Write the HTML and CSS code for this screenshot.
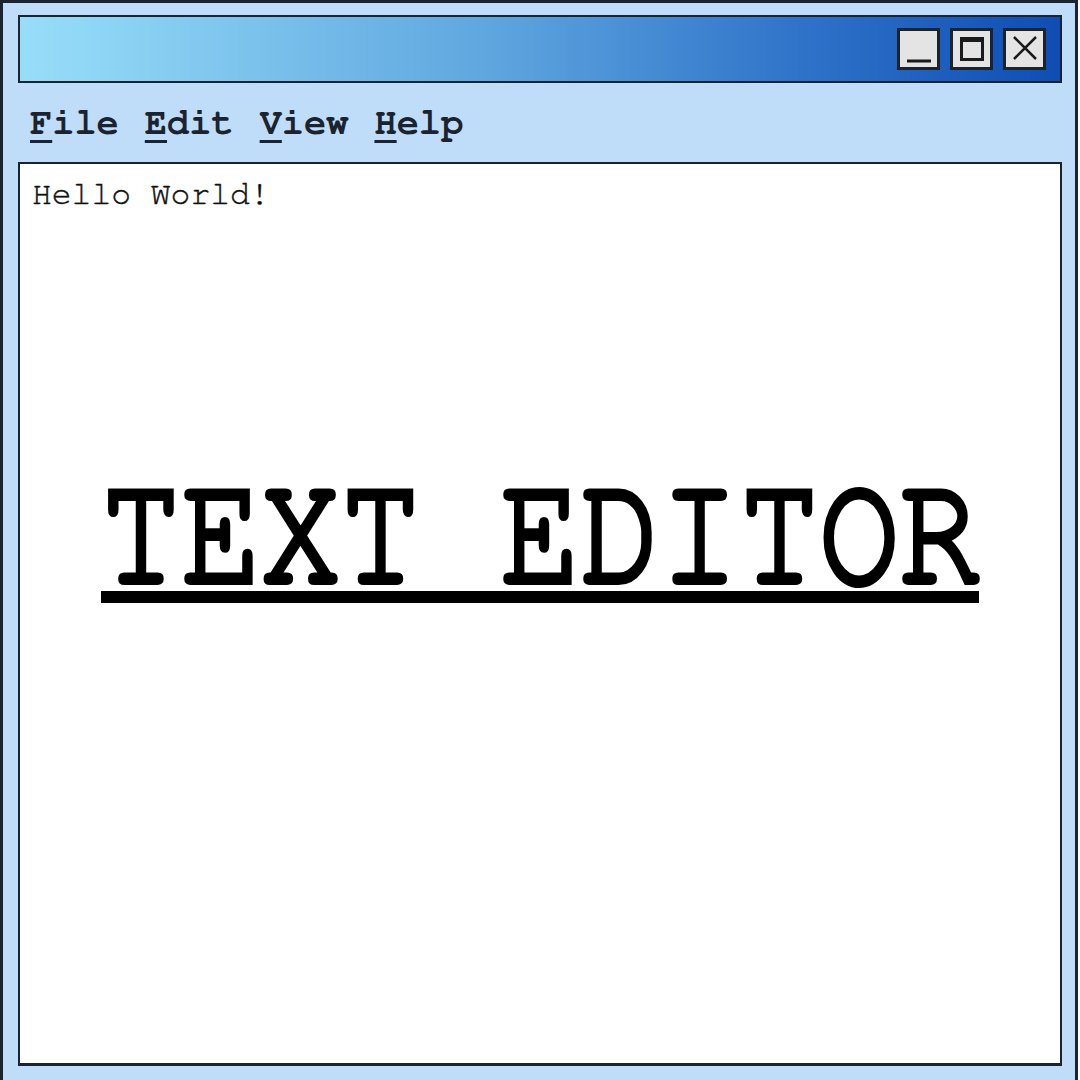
FILE: index.html
```html
<!DOCTYPE html>
<html>
<head>
<meta charset="utf-8">
<link rel="stylesheet" href="styles.css">
</head>
<body>
<div class="window">
  <div class="titlebar">
    <div class="controls">
      <div class="btn">
        <svg width="36" height="36" viewBox="0 0 36 36"><line x1="6" y1="30" x2="30" y2="30" stroke="#1a1a1a" stroke-width="3"/></svg>
      </div>
      <div class="btn">
        <svg width="36" height="36" viewBox="0 0 36 36"><rect x="7.5" y="7.5" width="21" height="21" fill="none" stroke="#1a1a1a" stroke-width="3"/><rect x="6" y="6" width="24" height="5" fill="#1a1a1a"/></svg>
      </div>
      <div class="btn">
        <svg width="36" height="36" viewBox="0 0 36 36"><path d="M7 6 L29 28 M29 6 L7 28" stroke="#1a1a1a" stroke-width="2.5" fill="none"/></svg>
      </div>
    </div>
  </div>
  <div class="menubar">
    <span class="menu"><u>F</u>ile</span>
    <span class="menu"><u>E</u>dit</span>
    <span class="menu"><u>V</u>iew</span>
    <span class="menu"><u>H</u>elp</span>
  </div>
  <div class="editor">
    <div class="content">Hello World!</div>
    <div class="headline-row">
      <div class="headline"><span class="headline-text">TEXT EDITOR</span></div>
    </div>
  </div>
</div>
</body>
</html>
```
FILE: styles.css
```css
html, body {
  margin: 0;
  padding: 0;
  background: #ffffff;
  overflow: hidden;
  width: 1080px;
  height: 1080px;
}
.window {
  box-sizing: border-box;
  width: 1078px;
  height: 1110px;
  background: #bfddf8;
  border: 3px solid #1b2330;
  padding: 12px 13px 0 15px;
  display: flex;
  flex-direction: column;
}
.titlebar {
  box-sizing: border-box;
  height: 68px;
  border: 2px solid #1b2330;
  background: linear-gradient(to right, #98def9 0%, #5fa6df 45%, #2f73c9 75%, #0f4db3 100%);
  display: flex;
  justify-content: flex-end;
  align-items: center;
  padding-right: 14px;
}
.controls {
  display: flex;
  gap: 10px;
}
.btn {
  box-sizing: border-box;
  width: 43px;
  height: 42px;
  background: #e4e4e4;
  border: 3px solid #1b2330;
  display: flex;
  align-items: center;
  justify-content: center;
}
.btn svg { display: block; }
.menubar {
  height: 79px;
  display: flex;
  align-items: center;
  gap: 26px;
  padding-left: 12px;
  font-family: "Nimbus Mono PS", "Nimbus Mono L", "FreeMono", "Courier 10 Pitch", "Liberation Mono", monospace;
  font-weight: bold;
  font-size: 37px;
  color: #1b2330;
}
.menu u {
  text-decoration-thickness: 3px;
  text-underline-offset: 6px;
}
.editor {
  box-sizing: border-box;
  height: 904px;
  background: #ffffff;
  border: 2px solid #1b2330;
  border-bottom-width: 3px;
  display: flex;
  flex-direction: column;
}
.content {
  padding: 14px 0 0 12px;
  font-family: "Nimbus Mono PS", "Nimbus Mono L", "FreeMono", "Courier 10 Pitch", "Liberation Mono", monospace;
  font-size: 33px;
  color: #111;
  -webkit-text-stroke: 0.4px #111;
}
.headline-row {
  margin-top: 280px;
  display: flex;
  justify-content: center;
}
.headline {
  border-bottom: 12px solid #000;
  padding-bottom: 0;
}
.headline-text {
  display: block;
  font-family: "Nimbus Mono PS", "Nimbus Mono L", "FreeMono", "Liberation Mono", monospace;
  font-weight: normal;
  font-size: 133px;
  line-height: 100px;
  color: #000;
  -webkit-text-stroke: 5px #000;
  white-space: pre;
  transform: scaleY(1.21);
  transform-origin: 50% 80%;
}
```
